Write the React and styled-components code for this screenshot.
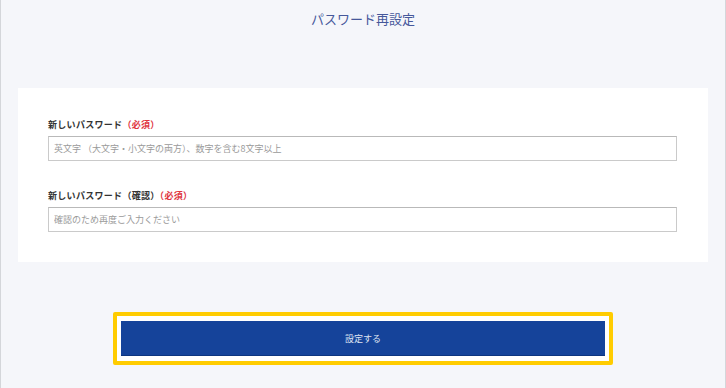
import styled, { createGlobalStyle } from "styled-components";

const Global = createGlobalStyle`
  html, body {
    margin: 0;
    padding: 0;
    background: #f5f6fa;
  }
  body {
    font-family: "Noto Sans CJK JP", "Noto Sans", sans-serif;
  }
`;

const Page = styled.div`
  min-height: 388px;
  box-sizing: border-box;
  border-left: 1px solid #d4d6da;
  border-right: 1px solid #d4d6da;
  padding: 11px 17px 0 17px;
  display: flex;
  flex-direction: column;
`;

const Title = styled.h1`
  margin: 0;
  text-align: center;
  font-size: 13px;
  line-height: 16px;
  font-weight: 400;
  color: #46589a;
`;

const Card = styled.div`
  margin-top: 61px;
  background: #fff;
  padding: 30px 31px 30px 30px;
  display: flex;
  flex-direction: column;
  gap: 28px;
`;

const Field = styled.div`
  display: flex;
  flex-direction: column;
  gap: 5px;
`;

const Label = styled.label`
  font-size: 9px;
  line-height: 13px;
  font-weight: 700;
  color: #333;
  letter-spacing: 0.3px;
`;

const Required = styled.span`
  color: #e0353f;
  font-weight: 700;
`;

const Input = styled.input`
  box-sizing: border-box;
  height: 25px;
  width: 100%;
  border: 1px solid #cacaca;
  border-top-color: #b9b9b9;
  border-radius: 0;
  padding: 0 5px;
  font-family: inherit;
  font-size: 9px;
  color: #333;
  outline: none;
  &::placeholder {
    color: #9a9a9a;
  }
`;

const Focus = styled.div`
  align-self: center;
  margin-top: 50px;
  width: 500px;
  box-sizing: border-box;
  border: 4px solid #ffcc00;
  border-radius: 2px;
  background: #fff;
  padding: 5px 4px;
`;

const Submit = styled.button`
  display: block;
  width: 100%;
  height: 35px;
  border: none;
  border-bottom: 1px solid #0d3580;
  background: #15439a;
  color: #dfe4f2;
  font-family: inherit;
  font-size: 9px;
  cursor: pointer;
`;

export default function App() {
  return (
    <>
      <Global />
      <Page>
        <Title>パスワード再設定</Title>
        <Card>
          <Field>
            <Label>
              新しいパスワード<Required>（必須）</Required>
            </Label>
            <Input
              type="password"
              placeholder="英文字 （大文字・小文字の両方）、数字を含む8文字以上"
            />
          </Field>
          <Field>
            <Label>
              新しいパスワード（確認）<Required>（必須）</Required>
            </Label>
            <Input type="password" placeholder="確認のため再度ご入力ください" />
          </Field>
        </Card>
        <Focus>
          <Submit>設定する</Submit>
        </Focus>
      </Page>
    </>
  );
}
